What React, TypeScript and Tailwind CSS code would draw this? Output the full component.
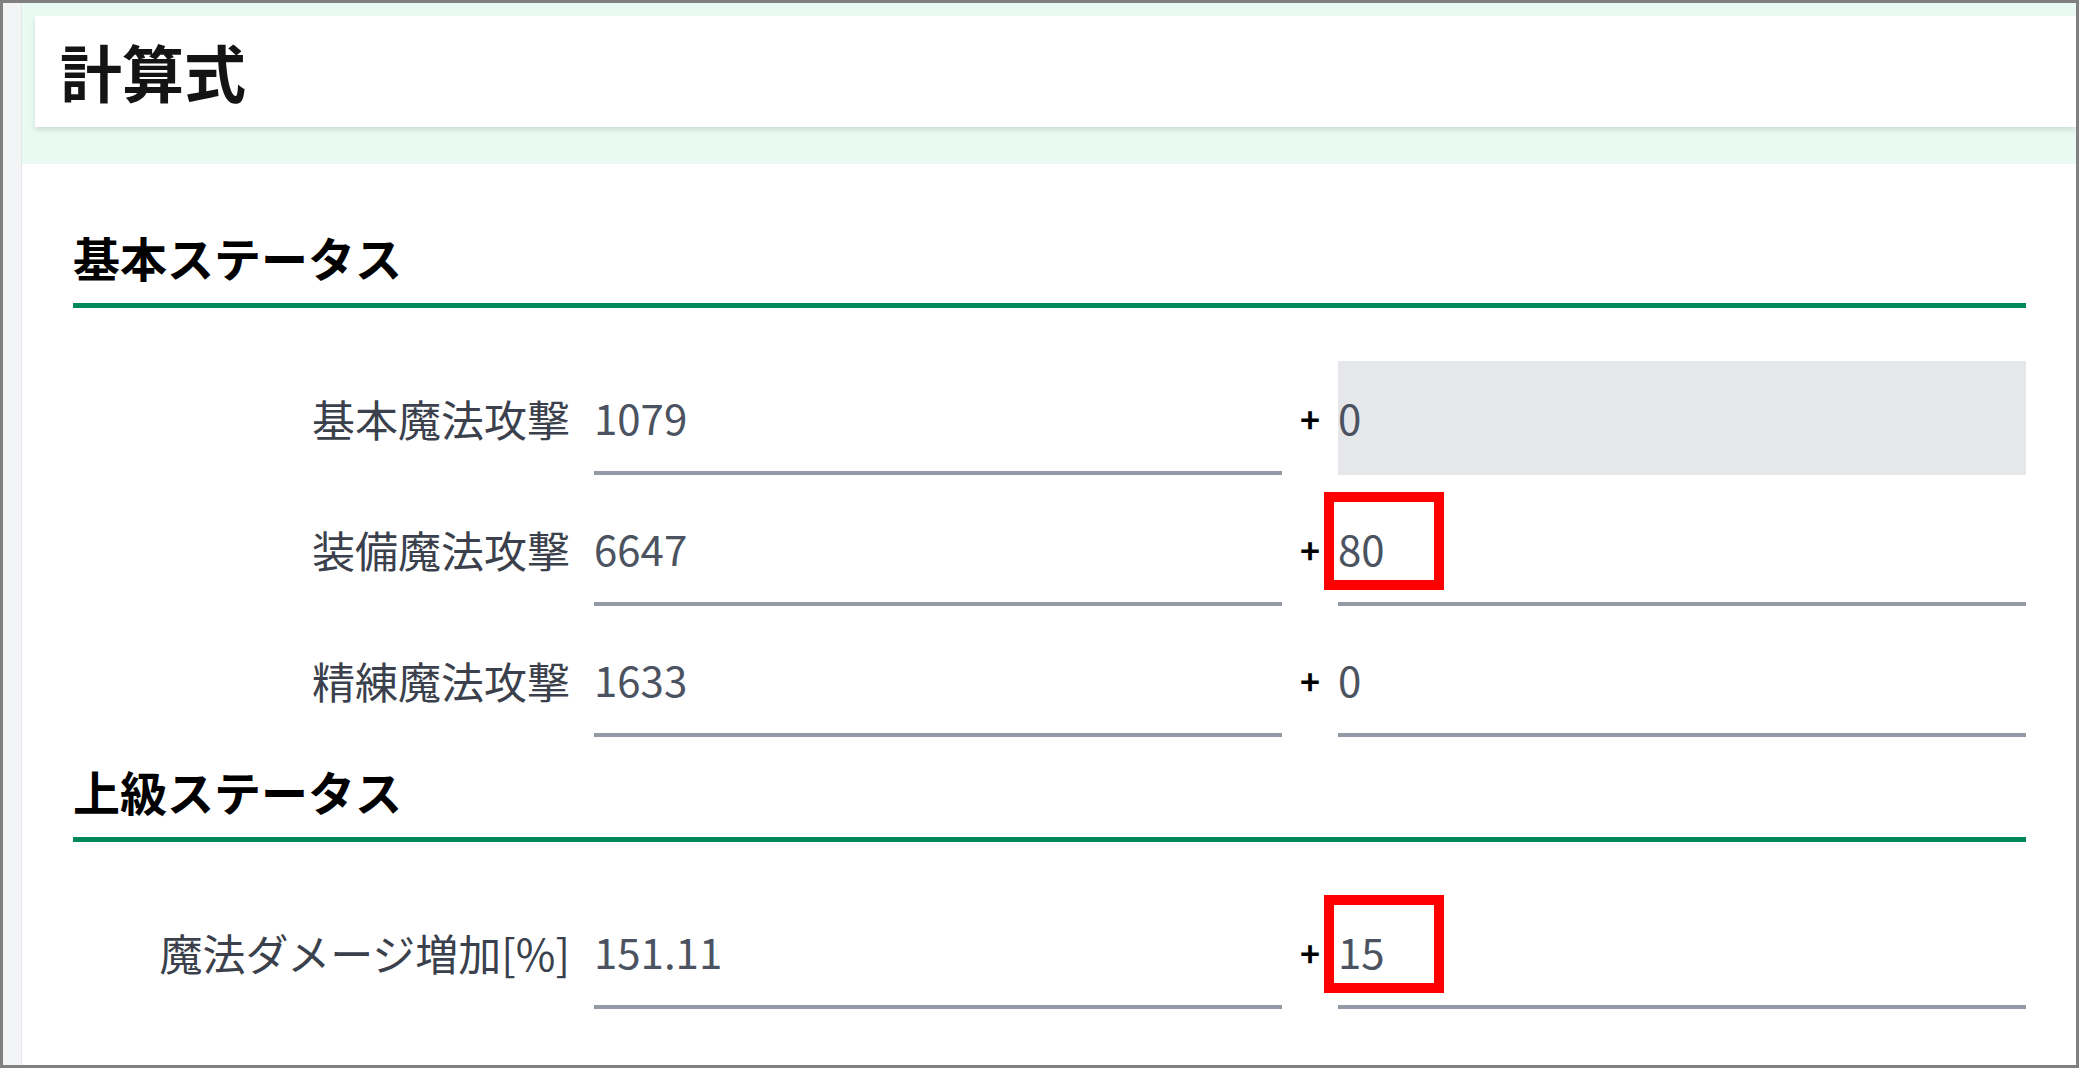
const rows1 = [
  { label: '基本魔法攻撃', value: '1079', extra: '0', disabled: true, mark: false },
  { label: '装備魔法攻撃', value: '6647', extra: '80', disabled: false, mark: true },
  { label: '精練魔法攻撃', value: '1633', extra: '0', disabled: false, mark: false },
];

const rows2 = [
  { label: '魔法ダメージ増加[%]', value: '151.11', extra: '15', disabled: false, mark: true },
  { label: '魔法攻撃増加', value: '0', extra: '0', disabled: false, mark: false },
];

type Row = { label: string; value: string; extra: string; disabled: boolean; mark: boolean };

function StatRow({ row }: { row: Row }) {
  return (
    <div className="flex items-center mt-[17px] first:mt-[53px]">
      <div className="w-[521px] shrink-0 pr-[24px] text-right text-[43px] text-[#3b414c] whitespace-nowrap">
        {row.label}
      </div>
      <div className="flex-1 h-[114px] flex items-center border-b-4 border-[#9399a5] text-[42px] text-[#4b5260]">
        {row.value}
      </div>
      <div className="w-[56px] shrink-0 text-center text-[34px] font-bold text-black">+</div>
      <div
        className={
          row.disabled
            ? 'relative flex-1 h-[114px] flex items-center border-b-4 border-[#e5e7eb] bg-[#e5e7eb] text-[42px] text-[#4b5260]'
            : 'relative flex-1 h-[114px] flex items-center border-b-4 border-[#9399a5] text-[42px] text-[#4b5260]'
        }
      >
        {row.extra}
        {/* annotation box drawn over the input */}
        {row.mark && (
          <div className="absolute left-[-14px] top-0 w-[120px] h-[98px] border-[10px] border-[#ff0000]" />
        )}
      </div>
    </div>
  );
}

function Section({ title, rows, first }: { title: string; rows: Row[]; first?: boolean }) {
  return (
    <div className={first ? '' : 'mt-[19px]'}>
      <h2 className="text-[47px] leading-[69px] font-bold text-black pb-[12px] border-b-[5px] border-[#00875a]">
        {title}
      </h2>
      <div>
        {rows.map((r) => (
          <StatRow key={r.label} row={r} />
        ))}
      </div>
    </div>
  );
}

export default function App() {
  return (
    <div className="h-[1068px] w-full overflow-hidden border-[3px] border-[#808080] bg-white flex font-['Noto_Sans_CJK_JP',sans-serif]">
      <div className="w-[19px] shrink-0 bg-[#f3f4f6] border-r border-[#e5e7eb]" />
      <div className="flex-1 min-w-0 flex flex-col">
        <div className="bg-[#e9faf3] pt-[13px] pb-[37px] pl-[13px]">
          <div className="h-[111px] bg-white shadow-[0_3px_5px_rgba(0,0,0,0.12)] flex items-center pl-[25px]">
            <h1 className="text-[62px] font-bold text-[#141414]">計算式</h1>
          </div>
        </div>
        <div className="pl-[51px] pr-[50px] pt-[58px]">
          <Section title="基本ステータス" rows={rows1} first />
          <Section title="上級ステータス" rows={rows2} />
        </div>
      </div>
    </div>
  );
}
